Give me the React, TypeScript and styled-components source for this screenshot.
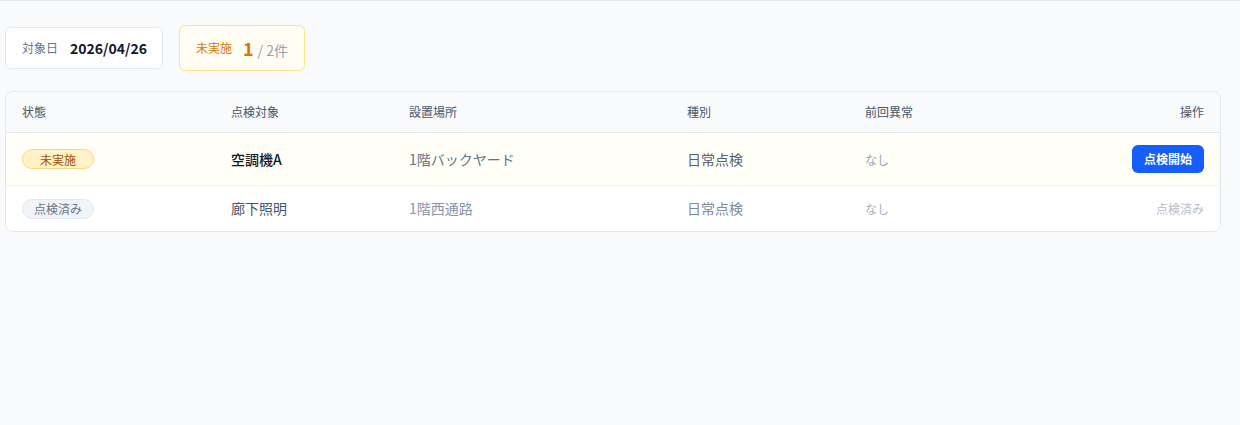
import styled, { createGlobalStyle } from "styled-components";

type Status = "pending" | "done";

interface Inspection {
  id: number;
  status: Status;
  target: string;
  location: string;
  kind: string;
  lastIssue: string;
}

const inspections: Inspection[] = [
  { id: 1, status: "pending", target: "空調機A", location: "1階バックヤード", kind: "日常点検", lastIssue: "なし" },
  { id: 2, status: "done", target: "廊下照明", location: "1階西通路", kind: "日常点検", lastIssue: "なし" },
];

export default function App() {
  const pending = inspections.filter((i) => i.status === "pending").length;

  return (
    <>
      <GlobalStyle />
      <Page>
        <Summary>
          <DateCard>
            <Label>対象日</Label>
            <DateValue>2026/04/26</DateValue>
          </DateCard>

          <PendingCard>
            <PendingLabel>未実施</PendingLabel>
            <Count>
              <strong>{pending}</strong>
              <span>/ {inspections.length}件</span>
            </Count>
          </PendingCard>
        </Summary>

        <Table>
          <HeadRow>
            <div>状態</div>
            <div>点検対象</div>
            <div>設置場所</div>
            <div>種別</div>
            <div>前回異常</div>
            <HeadAction>操作</HeadAction>
          </HeadRow>

          {inspections.map((item) => {
            const isPending = item.status === "pending";
            return (
              <Row key={item.id} $pending={isPending}>
                <Cell>
                  <Badge $pending={isPending}>{isPending ? "未実施" : "点検済み"}</Badge>
                </Cell>
                <Target $pending={isPending}>{item.target}</Target>
                <Location $pending={isPending}>{item.location}</Location>
                <Kind $pending={isPending}>{item.kind}</Kind>
                <Issue $pending={isPending}>{item.lastIssue}</Issue>
                <Action>
                  {isPending ? <StartButton>点検開始</StartButton> : <DoneText>点検済み</DoneText>}
                </Action>
              </Row>
            );
          })}
        </Table>
      </Page>
    </>
  );
}

const GlobalStyle = createGlobalStyle`
  * {
    box-sizing: border-box;
  }

  body {
    margin: 0;
    background-color: #f8fafc;
    font-family: "Noto Sans CJK JP", "Noto Sans", sans-serif;
    color: #0f172a;
  }
`;

const Page = styled.div`
  min-height: 425px;
  border-top: 1px solid #e2e8f0;
  padding: 24px 19px 0 5px;

  display: flex;
  flex-direction: column;
  gap: 20px;
`;

const Summary = styled.div`
  display: flex;
  align-items: center;
  gap: 16px;
`;

const DateCard = styled.div`
  display: flex;
  align-items: center;
  gap: 12px;
  padding: 10px 15px 10px 16px;
  background-color: #ffffff;
  border: 1px solid #e2e8f0;
  border-radius: 6px;
  line-height: 20px;
`;

const Label = styled.span`
  color: #64748b;
  font-size: 12px;
`;

const DateValue = styled.span`
  color: #0f172a;
  font-size: 14px;
  font-weight: 700;
`;

const PendingCard = styled.div`
  display: flex;
  align-items: center;
  gap: 11px;
  padding: 10px 16px;
  background-color: #fffdf3;
  border: 1px solid #fde68a;
  border-radius: 6px;
`;

const PendingLabel = styled.span`
  color: #d97706;
  font-size: 12px;
  line-height: 20px;
`;

const Count = styled.span`
  display: flex;
  align-items: baseline;
  gap: 4px;

  strong {
    color: #d97706;
    font-size: 18px;
    font-weight: 700;
    line-height: 24px;
  }

  span {
    color: #94a3b8;
    font-size: 14px;
  }
`;

const Table = styled.div`
  background-color: #ffffff;
  border: 1px solid #e2e8f0;
  border-radius: 8px;
  overflow: hidden;
`;

const columns = "209px 178px 278px 178px 1fr auto";

const HeadRow = styled.div`
  display: grid;
  grid-template-columns: ${columns};
  align-items: center;
  padding: 12px 16px;
  background-color: #f8fafc;
  border-bottom: 1px solid #e2e8f0;

  color: #475569;
  font-size: 12px;
  line-height: 16px;

  & > div {
    padding-right: 16px;
  }
`;

const HeadAction = styled.div`
  text-align: right;
  padding-right: 0 !important;
`;

const Row = styled.div<{ $pending: boolean }>`
  display: grid;
  grid-template-columns: ${columns};
  align-items: center;
  padding: 12px 16px;
  font-size: 14px;
  line-height: 21px;
  background-color: ${({ $pending }) => ($pending ? "#fffef7" : "#ffffff")};
  border-bottom: 1px solid #f1f5f9;

  &:last-child {
    border-bottom: none;
  }

  & > div {
    padding-right: 16px;
  }
`;

const Cell = styled.div`
  display: flex;
  align-items: center;
`;

const Badge = styled.span<{ $pending: boolean }>`
  display: inline-flex;
  align-items: center;
  justify-content: center;
  min-width: 72px;
  height: 20px;
  padding: 0 10px;
  border-radius: 999px;
  font-size: 12px;
  border: 1px solid ${({ $pending }) => ($pending ? "#fcd980" : "#e2e8f0")};
  background-color: ${({ $pending }) => ($pending ? "#fef3c7" : "#f1f5f9")};
  color: ${({ $pending }) => ($pending ? "#a14c05" : "#64748b")};
`;

const Target = styled.div<{ $pending: boolean }>`
  font-weight: ${({ $pending }) => ($pending ? 500 : 400)};
  color: ${({ $pending }) => ($pending ? "#0f172a" : "#475569")};
`;

const Location = styled.div<{ $pending: boolean }>`
  color: ${({ $pending }) => ($pending ? "#64748b" : "#8a95a7")};
`;

const Kind = styled.div<{ $pending: boolean }>`
  color: ${({ $pending }) => ($pending ? "#556275" : "#7f8a9c")};
`;

const Issue = styled.div<{ $pending: boolean }>`
  font-size: 12px;
  color: ${({ $pending }) => ($pending ? "#94a3b8" : "#a5afbd")};
`;

const Action = styled.div`
  display: flex;
  justify-content: flex-end;
  padding-right: 0 !important;
`;

const StartButton = styled.button`
  height: 28px;
  padding: 0 12px;
  border: none;
  border-radius: 6px;
  background-color: #155dfc;
  color: #ffffff;
  font-family: inherit;
  font-size: 12px;
  font-weight: 700;
  line-height: 28px;
  cursor: pointer;
`;

const DoneText = styled.span`
  color: #b4bdca;
  font-size: 12px;
`;
